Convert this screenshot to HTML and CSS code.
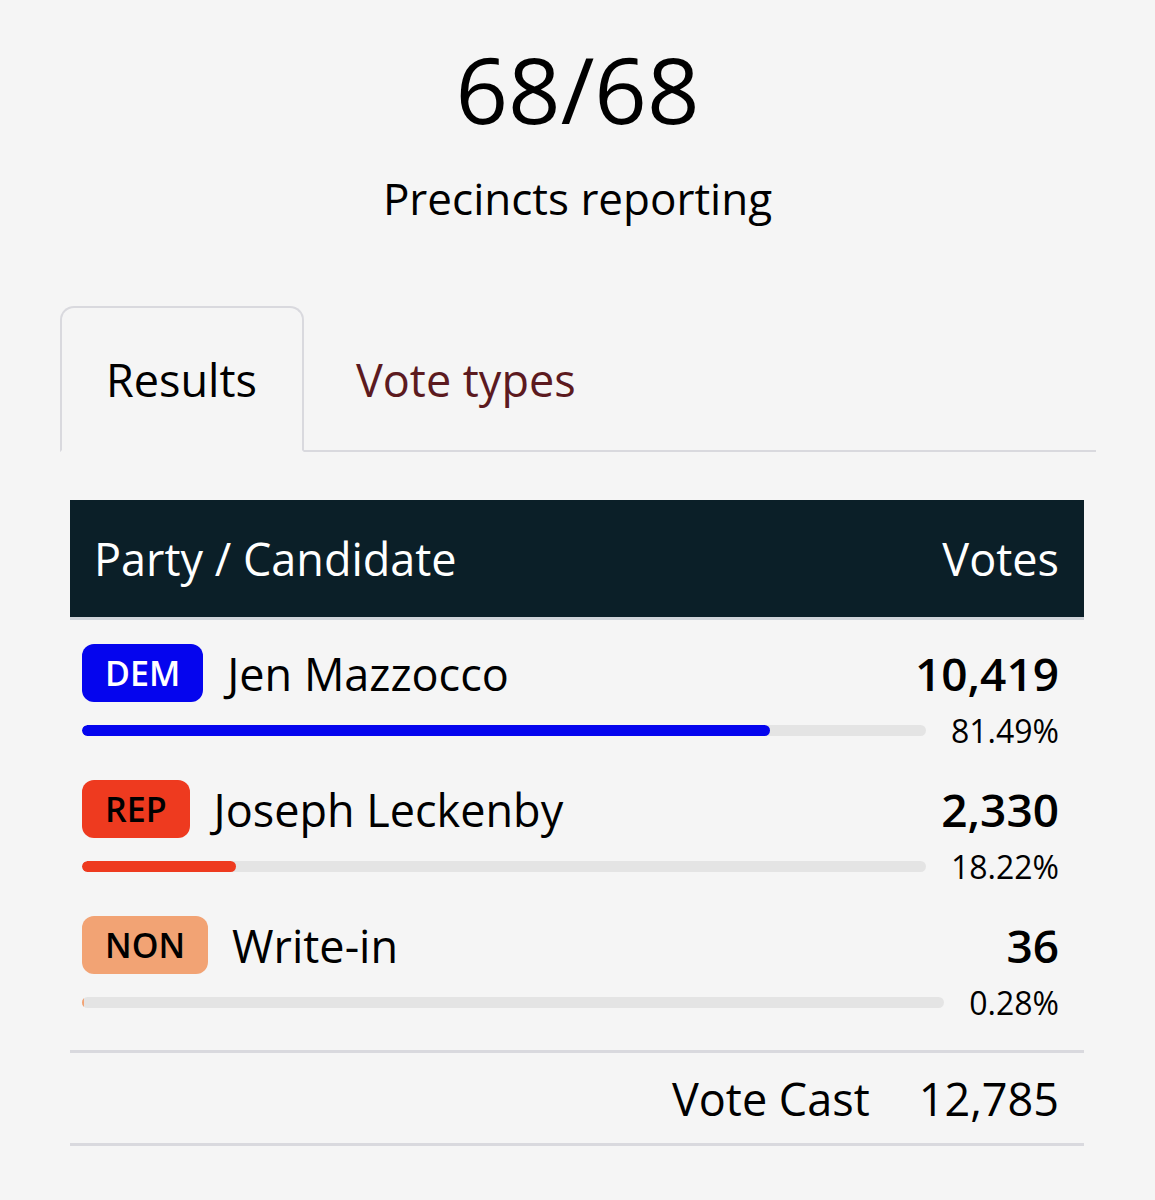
FILE: index.html
```html
<!DOCTYPE html>
<html lang="en">
<head>
<meta charset="utf-8">
<title>Election results</title>
<link rel="stylesheet" href="styles.css">
</head>
<body>
<div class="page">
  <section class="summary">
    <p class="count">68/68</p>
    <p class="count-label">Precincts reporting</p>
  </section>

  <nav class="tabs">
    <div class="tab active">Results</div>
    <div class="tab">Vote types</div>
  </nav>

  <section class="results">
    <div class="results-head">
      <span>Party / Candidate</span>
      <span>Votes</span>
    </div>

    <div class="row">
      <div class="row-top">
        <span class="badge dem">DEM</span>
        <span class="name">Jen Mazzocco</span>
        <span class="votes">10,419</span>
      </div>
      <div class="row-bottom">
        <div class="track"><div class="fill dem-fill" style="width:81.49%"></div></div>
        <span class="pct">81.49%</span>
      </div>
    </div>

    <div class="row">
      <div class="row-top">
        <span class="badge rep">REP</span>
        <span class="name">Joseph Leckenby</span>
        <span class="votes">2,330</span>
      </div>
      <div class="row-bottom">
        <div class="track"><div class="fill rep-fill" style="width:18.22%"></div></div>
        <span class="pct">18.22%</span>
      </div>
    </div>

    <div class="row">
      <div class="row-top">
        <span class="badge non">NON</span>
        <span class="name">Write-in</span>
        <span class="votes">36</span>
      </div>
      <div class="row-bottom">
        <div class="track"><div class="fill non-fill" style="width:0.28%"></div></div>
        <span class="pct">0.28%</span>
      </div>
    </div>

    <div class="total">
      <span class="total-label">Vote Cast</span>
      <span class="total-value">12,785</span>
    </div>
  </section>
</div>
</body>
</html>
```

FILE: styles.css
```css
* { box-sizing: border-box; }

html, body {
  margin: 0;
  padding: 0;
  background: #f5f5f5;
}

body {
  font-family: "Open Sans", "Noto Sans", sans-serif;
  color: #000;
}

.page {
  width: 1155px;
  min-height: 1200px;
}

.summary {
  padding-top: 46px;
  text-align: center;
}

.count {
  margin: 0;
  font-size: 92px;
  line-height: 86px;
}

.count-label {
  margin: 36px 0 0;
  font-size: 44px;
  line-height: 60px;
}

.tabs {
  display: flex;
  margin: 78px 59px 0 60px;
  border-bottom: 2px solid #d9d9de;
}

.tab {
  height: 146px;
  display: flex;
  align-items: center;
  padding: 0 45px 0 44px;
  font-size: 45px;
  color: #5c1a1f;
  border: 2px solid transparent;
  border-radius: 14px 14px 0 0;
  margin-bottom: -2px;
}

.tab + .tab {
  padding-left: 50px;
}

.tab.active {
  color: #000;
  border-color: #d9d9de;
  border-bottom-color: #f5f5f5;
  background: #f5f5f5;
}

.results {
  margin: 48px 71px 0 70px;
}

.results-head {
  height: 120px;
  display: flex;
  align-items: center;
  justify-content: space-between;
  padding: 0 25px 0 24px;
  background: #0b1f28;
  color: #fff;
  font-size: 45px;
  border-bottom: 3px solid #d0d4da;
}

.row {
  padding: 24px 25px 6px 12px;
}

.row-top {
  height: 58px;
  display: flex;
  align-items: center;
}

.badge {
  height: 58px;
  display: flex;
  align-items: center;
  padding: 0 23px;
  border-radius: 12px;
  font-size: 34px;
  font-weight: 600;
}

.dem { background: #0505ee; color: #fff; }
.rep { background: #ee3a1f; color: #000; }
.non { background: #f2a374; color: #000; }

.name {
  margin-left: 24px;
  font-size: 45px;
}

.votes {
  margin-left: auto;
  font-size: 46px;
  font-weight: 600;
}

.row-bottom {
  margin-top: 8px;
  height: 40px;
  display: flex;
  align-items: center;
  gap: 25px;
}

.track {
  flex: 1;
  height: 11px;
  border-radius: 6px;
  background: #e4e4e4;
  overflow: hidden;
}

.fill {
  height: 100%;
  border-radius: 6px;
}

.dem-fill { background: #0505ee; }
.rep-fill { background: #ee3a1f; }
.non-fill { background: #f2a374; }

.pct {
  font-size: 32px;
}

.total {
  margin-top: 22px;
  height: 96px;
  display: flex;
  align-items: center;
  justify-content: flex-end;
  gap: 49px;
  padding-right: 25px;
  border-top: 3px solid #d9d9de;
  border-bottom: 3px solid #d9d9de;
  font-size: 45px;
}
```
